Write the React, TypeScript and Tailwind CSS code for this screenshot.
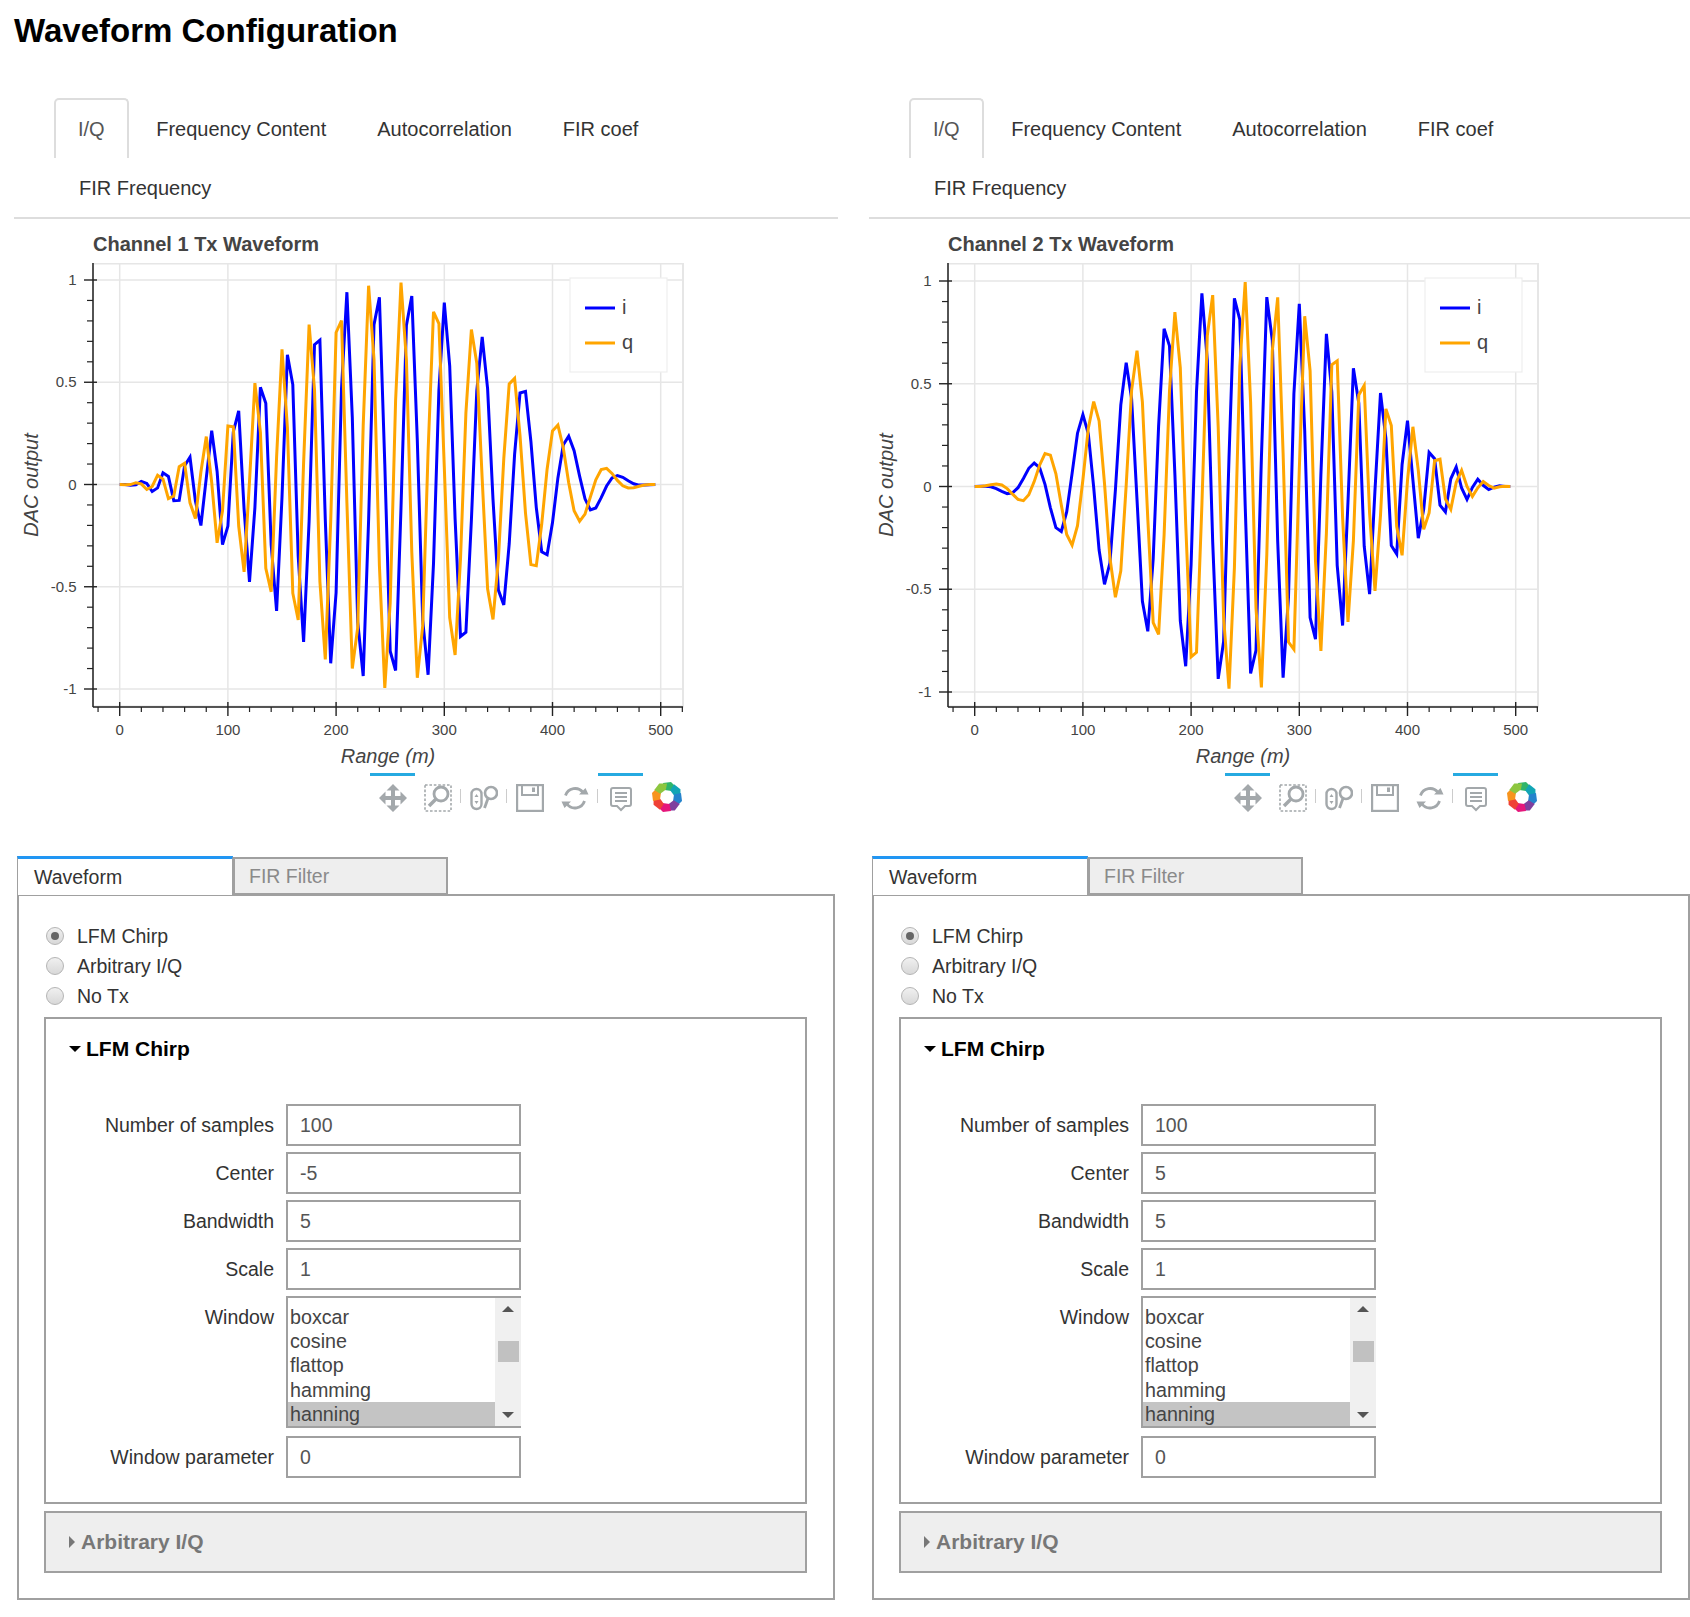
import React from 'react';

const FONT = { fontFamily: '"Liberation Sans", Arial, sans-serif' };
const GRID = '#e6e6e6';
const ICON = '#a3a8ab';

// chirp: 100 samples at 30 MHz, hanning window, 5 m per sample
function chirp(center: number, bw: number) {
  const n = 100;
  const f0 = (center - bw / 2) / 30;
  const k = bw / 30 / n;
  const i: number[] = [];
  const q: number[] = [];
  for (let s = 0; s < n; s++) {
    const w = 0.5 - 0.5 * Math.cos((2 * Math.PI * s) / (n - 1));
    const ph = 2 * Math.PI * (f0 * s + 0.5 * k * s * s + 0.015);
    i.push(w * Math.cos(ph));
    q.push(w * Math.sin(ph));
  }
  return { i, q };
}

function Plot({ center, top, bottom }: { center: number; top: number; bottom: number }) {
  const { i, q } = chirp(center, 5);
  const xPx = (m: number) => 119.7 + m * 1.082;
  const yPx = (v: number) => (top + bottom) / 2 - (v * (bottom - top)) / 2;
  const line = (d: number[]) => d.map((v, s) => `${xPx(s * 5).toFixed(1)},${yPx(v).toFixed(1)}`).join(' ');
  const majorX = [0, 100, 200, 300, 400, 500];
  const majorY = [1, 0.5, 0, -0.5, -1];
  const minorX = Array.from({ length: 28 }, (_, k) => -20 + k * 20).filter((m) => m % 100 !== 0);
  const minorY = Array.from({ length: 21 }, (_, k) => -1 + k * 0.1).filter((_, k) => k % 5 !== 0);
  const ticks = { fontSize: 15, fill: '#444' };

  return (
    <svg viewBox="0 263 700 510" className="block w-[700px] h-[510px]" style={FONT}>
      <rect x="93" y="263.5" width="590" height="443" fill="none" stroke={GRID} strokeWidth="2" />
      {majorX.map((m) => (
        <line key={m} x1={xPx(m)} x2={xPx(m)} y1="264" y2="706" stroke={GRID} strokeWidth="1.5" />
      ))}
      {majorY.map((v) => (
        <line key={v} x1="93" x2="683" y1={yPx(v)} y2={yPx(v)} stroke={GRID} strokeWidth="1.5" />
      ))}
      <polyline points={line(i)} fill="none" stroke="#0000ff" strokeWidth="3" />
      <polyline points={line(q)} fill="none" stroke="#ffa500" strokeWidth="3" />

      <rect x="570" y="278" width="97" height="94" fill="#fff" stroke="#eeeeee" strokeWidth="1.2" />
      <line x1="585" x2="615" y1="308" y2="308" stroke="#0000ff" strokeWidth="3" />
      <line x1="585" x2="615" y1="343" y2="343" stroke="#ffa500" strokeWidth="3" />
      <text x="622" y="314" fontSize="20" fill="#444">i</text>
      <text x="622" y="349" fontSize="20" fill="#444">q</text>

      <line x1="93" x2="93" y1="263" y2="707" stroke="#222" strokeWidth="1.5" />
      <line x1="93" x2="683" y1="707" y2="707" stroke="#222" strokeWidth="1.5" />
      {majorY.map((v) => (
        <line key={v} x1="84" x2="97" y1={yPx(v)} y2={yPx(v)} stroke="#222" strokeWidth="1.4" />
      ))}
      {minorY.map((v) => (
        <line key={v} x1="87" x2="93" y1={yPx(v)} y2={yPx(v)} stroke="#222" strokeWidth="1.2" />
      ))}
      {majorX.map((m) => (
        <line key={m} x1={xPx(m)} x2={xPx(m)} y1="702" y2="716" stroke="#222" strokeWidth="1.4" />
      ))}
      {minorX.map((m) => (
        <line key={m} x1={xPx(m)} x2={xPx(m)} y1="707" y2="712" stroke="#222" strokeWidth="1.2" />
      ))}
      {majorX.map((m) => (
        <text key={m} x={xPx(m)} y="735" textAnchor="middle" {...ticks}>{m}</text>
      ))}
      {majorY.map((v) => (
        <text key={v} x="76.5" y={yPx(v) + 5} textAnchor="end" {...ticks}>{v}</text>
      ))}
      <text x="388" y="763" textAnchor="middle" fontSize="20" fontStyle="italic" fill="#444">Range (m)</text>
      <text
        transform="translate(38 485) rotate(-90)"
        textAnchor="middle"
        fontSize="20"
        fontStyle="italic"
        fill="#444"
      >
        DAC output
      </text>
    </svg>
  );
}

function PanIcon() {
  return (
    <svg viewBox="0 0 28 28" className="w-[28px] h-[28px]" fill={ICON}>
      <rect x="12" y="5" width="4" height="18" />
      <rect x="5" y="12" width="18" height="4" />
      <path d="M14 0l6.5 6.5h-13zM14 28l-6.5-6.5h13zM0 14l6.5-6.5v13zM28 14l-6.5 6.5v-13z" />
    </svg>
  );
}

function BoxZoomIcon() {
  return (
    <svg viewBox="0 0 28 28" className="w-[28px] h-[28px]" fill="none" stroke={ICON}>
      <rect x="1" y="1" width="26" height="26" strokeWidth="1.6" strokeDasharray="2.6 1.8" />
      <circle cx="17" cy="10" r="7" fill="#fff" strokeWidth="2.8" />
      <line x1="12" y1="15" x2="5" y2="22" strokeWidth="3.6" />
    </svg>
  );
}

function WheelZoomIcon() {
  return (
    <svg viewBox="0 0 28 28" className="w-[28px] h-[28px]" fill="none" stroke={ICON}>
      <rect x="1.5" y="5" width="10" height="20" rx="5" strokeWidth="2.4" />
      <path d="M6.5 10l2 3h-4zM6.5 20l-2-3h4z" fill={ICON} stroke="none" />
      <circle cx="21" cy="9" r="6" strokeWidth="2.6" />
      <line x1="18" y1="14.5" x2="14.5" y2="24" strokeWidth="2.8" />
    </svg>
  );
}

function SaveIcon() {
  return (
    <svg viewBox="0 0 28 28" className="w-[28px] h-[28px]" fill="none" stroke={ICON}>
      <rect x="1" y="1" width="26" height="26" strokeWidth="2.4" />
      <path d="M6 1v10h16V1" strokeWidth="2" />
      <rect x="16" y="3.5" width="3" height="4.5" fill={ICON} stroke="none" />
    </svg>
  );
}

function ResetIcon() {
  return (
    <svg viewBox="0 0 28 28" className="w-[28px] h-[28px]" fill="none" stroke={ICON}>
      <path d="M4.5 11.5A10 10 0 0 1 22 8.5" strokeWidth="2.8" />
      <path d="M23.5 17A10 10 0 0 1 6 20" strokeWidth="2.8" />
      <path d="M18 10.5h9.5l-3-6.5zM10 17.5H0.5l3 6.5z" fill={ICON} stroke="none" />
    </svg>
  );
}

function HoverIcon() {
  return (
    <svg viewBox="0 0 28 28" className="w-[28px] h-[28px]" fill="none" stroke={ICON}>
      <path d="M6 4h16a2 2 0 0 1 2 2v14a2 2 0 0 1-2 2h-4l-4 4-4-4H6a2 2 0 0 1-2-2V6a2 2 0 0 1 2-2z" strokeWidth="2" />
      <path d="M8 9h12M8 13h12M8 17h12" strokeWidth="1.8" />
    </svg>
  );
}

function BokehLogo() {
  const colors = ['#2fb56a', '#12a5b5', '#2583cc', '#7f3f9e', '#e5177b', '#ef4136', '#f7941d', '#8dc63f'];
  return (
    <svg viewBox="-16 -16 32 32" className="w-[32px] h-[32px] -mt-[3px]">
      {colors.map((c, k) => (
        <path key={c} transform={`rotate(${k * 45})`} d="M-4 -14L4 -15L9.5 -9.5L4.5 -6L-2.5 -7Z" fill={c} />
      ))}
    </svg>
  );
}

function ToolButton({ active, children }: { active?: boolean; children: React.ReactNode }) {
  return (
    <div className={`w-[45px] h-[46px] flex justify-center pt-[8px] border-t-[3px] ${active ? 'border-[#26aae1]' : 'border-transparent'}`}>
      {children}
    </div>
  );
}

function Sep() {
  return <div className="w-[1px] h-[14px] mt-[16px] bg-[#cccccc]" />;
}

function Radio({ label, checked }: { label: string; checked?: boolean }) {
  return (
    <div className="h-[30px] flex items-center ml-[2px]">
      <div className="w-[18px] h-[18px] rounded-full border border-[#b4b4b4] bg-linear-to-b from-[#f0f0f0] to-[#d8d8d8] flex items-center justify-center">
        {checked && <div className="w-[8px] h-[8px] rounded-full bg-[#666666]" />}
      </div>
      <span className="ml-[13px] pt-[2px] text-[19.5px] text-[#333]">{label}</span>
    </div>
  );
}

function Field({ label, value }: { label: string; value: string }) {
  return (
    <div className="flex items-center h-[42px] mb-[6px]">
      <label className="w-[228px] pt-[2px] text-right text-[19.5px] text-[#333]">{label}</label>
      <input
        readOnly
        value={value}
        className="ml-[12px] w-[235px] h-[42px] border-2 border-[#a0a0a0] px-[12px] text-[19.5px] text-[#555] outline-none"
      />
    </div>
  );
}

function WindowList() {
  const items = ['boxcar', 'cosine', 'flattop', 'hamming', 'hanning'];
  return (
    <div className="flex items-start h-[132px] mb-[8px]">
      <label className="w-[228px] text-right text-[19.5px] text-[#333] pt-[7px]">Window</label>
      <div className="ml-[12px] w-[235px] h-[132px] border-y-2 border-l-2 border-[#a0a0a0] flex">
        <div className="w-[207px] pt-[6.5px] text-[19.7px] text-[#444]">
          {items.map((it) => (
            <div key={it} className={`h-[24.4px] leading-[24.4px] pl-[2px] ${it === 'hanning' ? 'bg-[#c4c4c4]' : ''}`}>
              {it}
            </div>
          ))}
        </div>
        <div className="w-[26px] bg-[#f0f0f0] flex flex-col items-center justify-between py-[8px] relative">
          <div className="w-0 h-0 border-x-[6px] border-x-transparent border-b-[6px] border-b-[#555]" />
          <div className="absolute left-[3px] top-[43px] w-[21px] h-[21px] bg-[#c1c1c1]" />
          <div className="w-0 h-0 border-x-[6px] border-x-transparent border-t-[6px] border-t-[#555]" />
        </div>
      </div>
    </div>
  );
}

function Channel({ num, center, top, bottom }: { num: number; center: number; top: number; bottom: number }) {
  const tabs = ['I/Q', 'Frequency Content', 'Autocorrelation', 'FIR coef', 'FIR Frequency'];
  return (
    <div className="w-[855px] shrink-0">
      <div className="ml-[14px] mr-[17px] h-[121px] border-b-2 border-[#dddddd] pl-[39.5px] flex flex-wrap content-start">
        {tabs.map((t, k) => (
          <div
            key={t}
            className={
              k === 0
                ? 'h-[60px] px-[22.5px] mr-[1.5px] flex items-center border-x-2 border-t-2 border-[#dddddd] rounded-t-[5px] text-[20px] text-[#555]'
                : k === 4
                  ? 'h-[60px] px-[25.5px] flex items-center text-[20px] text-[#333]'
                  : 'h-[60px] px-[25.5px] pt-[2px] flex items-center text-[20px] text-[#333]'
            }
          >
            {t}
          </div>
        ))}
      </div>
      <div className="pl-[93px] pt-[6px] h-[44px] flex items-center text-[20px] font-bold text-[#444]">
        Channel {num} Tx Waveform
      </div>
      <Plot center={center} top={top} bottom={bottom} />
      <div className="h-[83px] pl-[370px] flex items-start">
        <ToolButton active><PanIcon /></ToolButton>
        <ToolButton><BoxZoomIcon /></ToolButton>
        <Sep />
        <ToolButton><WheelZoomIcon /></ToolButton>
        <Sep />
        <ToolButton><SaveIcon /></ToolButton>
        <ToolButton><ResetIcon /></ToolButton>
        <Sep />
        <ToolButton active><HoverIcon /></ToolButton>
        <ToolButton><div className="ml-[3px]"><BokehLogo /></div></ToolButton>
      </div>

      <div className="ml-[17px] mr-[20px]">
        <div className="flex h-[38px] relative z-10">
          <div className="w-[216px] h-[39px] pt-[1px] bg-white border-t-[3px] border-[#2196f3] border-x border-x-[#a0a0a0] pl-[16px] flex items-center text-[19.5px] text-[#333]">
            Waveform
          </div>
          <div className="w-[215px] mt-[1px] h-[38px] pt-[2px] bg-[#eeeeee] border-2 border-[#a0a0a0] pl-[14px] flex items-center text-[19.5px] text-[#8a8a8a]">
            FIR Filter
          </div>
        </div>
        <div className="border-2 border-[#a0a0a0] h-[706px] pt-[25px] pl-[25px] pr-[26px]">
          <div>
            <Radio label="LFM Chirp" checked />
            <Radio label="Arbitrary I/Q" />
            <Radio label="No Tx" />
          </div>
          <div className="mt-[6px] h-[487px] border-2 border-[#a0a0a0]">
            <div className="h-[58px] pt-[2px] pl-[23px] flex items-center">
              <div className="w-0 h-0 border-x-[6px] border-x-transparent border-t-[6px] border-t-black" />
              <span className="ml-[5px] text-[21px] font-bold text-black">LFM Chirp</span>
            </div>
            <div className="mt-[27px]">
              <Field label="Number of samples" value="100" />
              <Field label="Center" value={String(center)} />
              <Field label="Bandwidth" value="5" />
              <Field label="Scale" value="1" />
              <WindowList />
              <Field label="Window parameter" value="0" />
            </div>
          </div>
          <div className="mt-[7px] h-[62px] border-2 border-[#a0a0a0] bg-[#eeeeee] pl-[23px] flex items-center">
            <div className="w-0 h-0 border-y-[6px] border-y-transparent border-l-[6px] border-l-[#777]" />
            <span className="ml-[6px] text-[21px] font-bold text-[#777]">Arbitrary I/Q</span>
          </div>
        </div>
      </div>
    </div>
  );
}

export default function App() {
  return (
    <div className="w-[1690px] h-[1617px] bg-white overflow-hidden" style={FONT}>
      <h1 className="h-[98px] pl-[14px] pt-[12px] text-[33px] leading-[38px] font-bold text-black">
        Waveform Configuration
      </h1>
      <div className="flex">
        <Channel num={1} center={-5} top={280} bottom={689} />
        <Channel num={2} center={5} top={281} bottom={692} />
      </div>
    </div>
  );
}
